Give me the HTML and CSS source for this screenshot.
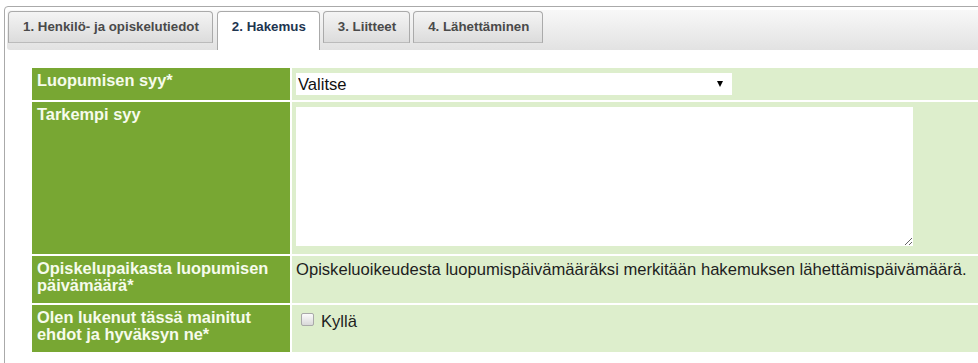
FILE: index.html
```html
<!DOCTYPE html>
<html lang="fi">
<head>
<meta charset="utf-8">
<title>Hakemus</title>
<link rel="stylesheet" href="styles.css">
</head>
<body>
<div class="tabs">
  <ul class="tab-nav">
    <li class="tab">1. Henkilö- ja opiskelutiedot</li>
    <li class="tab active">2. Hakemus</li>
    <li class="tab">3. Liitteet</li>
    <li class="tab">4. Lähettäminen</li>
  </ul>
  <div class="panel">
    <table class="form">
      <tr>
        <th class="label">Luopumisen syy*</th>
        <td class="value value-select">
          <div class="select-wrap">
            <select class="select"><option>Valitse</option></select>
          </div>
        </td>
      </tr>
      <tr>
        <th class="label">Tarkempi syy</th>
        <td class="value"><textarea class="area"></textarea></td>
      </tr>
      <tr>
        <th class="label">Opiskelupaikasta luopumisen päivämäärä*</th>
        <td class="value">Opiskeluoikeudesta luopumispäivämääräksi merkitään hakemuksen lähettämispäivämäärä.</td>
      </tr>
      <tr>
        <th class="label">Olen lukenut tässä mainitut ehdot ja hyväksyn ne*</th>
        <td class="value value-check">
          <label class="check"><input type="checkbox" class="box"><span>Kyllä</span></label>
        </td>
      </tr>
    </table>
  </div>
</div>
</body>
</html>
```
FILE: styles.css
```css
html, body {
  margin: 0;
  padding: 0;
  overflow: hidden;
  background: #fff;
  font-family: "Liberation Sans", Arial, sans-serif;
}

.tabs {
  margin: 6px 0 0 4px;
  width: 1040px;
  border: 1px solid #aaa;
  border-radius: 4px;
  padding: 3px 2px;
}

.tab-nav {
  list-style: none;
  margin: 0;
  padding: 1px 0 0 1px;
  height: 39px;
  display: flex;
  align-items: flex-start;
  gap: 3px;
  background: linear-gradient(#f8f8f8, #e2e2e2);
  border-radius: 3px;
}

.tab {
  height: 30px;
  line-height: 30px;
  padding: 0 13px 0 14px;
  border: 1px solid #aaa;
  border-bottom-color: #bbb;
  border-radius: 4px 4px 0 0;
  background: linear-gradient(#f4f4f4, #dcdcdc);
  font-size: 13.3px;
  font-weight: bold;
  color: #4a4a4a;
  white-space: nowrap;
}

.tab.active {
  height: 38px;
  border-bottom: none;
  background: #fff;
  color: #1e3550;
  margin-left: 1px;
}

.panel {
  padding: 16px 0 20px 23px;
}

.form {
  border-collapse: separate;
  border-spacing: 2px;
  width: 1000px;
}

.label {
  width: 247px;
  padding: 4px 6px 9px 5px;
  background: #78a733;
  color: #f6fbec;
  font-size: 16.4px;
  line-height: 17px;
  font-weight: bold;
  text-align: left;
  vertical-align: top;
}

.value {
  padding: 5px 4px 8px;
  background: #ddeecc;
  color: #1e1e1e;
  font-size: 16.6px;
  line-height: 18px;
  vertical-align: top;
  white-space: nowrap;
}

.value-select {
  padding: 5px 4px;
}

.value-check {
  padding-top: 8px;
}

.select-wrap {
  position: relative;
  width: 436px;
}

.select-wrap::after {
  content: "";
  position: absolute;
  right: 9px;
  top: 8px;
  border-left: 3.5px solid transparent;
  border-right: 3.5px solid transparent;
  border-top: 6px solid #000;
}

.select {
  -webkit-appearance: none;
  appearance: none;
  display: block;
  width: 436px;
  height: 22px;
  margin: 0;
  padding: 0 0 0 2px;
  border: none;
  border-radius: 0;
  background: #fff;
  font-family: "Liberation Sans", Arial, sans-serif;
  font-size: 16.6px;
  color: #111;
}

.area {
  display: block;
  box-sizing: border-box;
  width: 617px;
  height: 139px;
  margin: 0;
  padding: 2px;
  border: none;
  background: #fff;
  font-family: "Liberation Sans", Arial, sans-serif;
  font-size: 14px;
}

.check {
  display: flex;
  align-items: flex-start;
}

.box {
  -webkit-appearance: none;
  appearance: none;
  box-sizing: border-box;
  width: 13px;
  height: 13px;
  margin: 0 7px 0 5px;
  border: 1px solid #a9a9a9;
  border-radius: 2px;
  background: linear-gradient(#fbfbfb, #d9d9d9);
}
```
